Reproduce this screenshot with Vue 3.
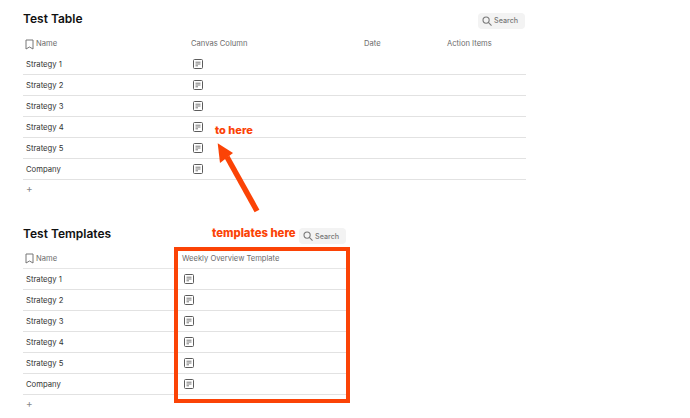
<script setup>
const names = ['Strategy 1','Strategy 2','Strategy 3','Strategy 4','Strategy 5','Company']
</script>

<template>
  <div class="page">
    <section class="block first">
      <div class="head wide">
        <h2>Test Table</h2>
        <button class="search">
          <svg width="10" height="10" viewBox="0 0 11 11" fill="none" stroke="#7a7a7a" stroke-width="1.2"><circle cx="4.500" cy="4.500" r="3.400"/><path d="M7 7l3.200 3.200" stroke-linecap="round"/></svg>
          Search
        </button>
      </div>
      <div class="table t1">
        <div class="row hdr">
          <div class="cell namecell">
            <svg class="mark" width="9" height="11" viewBox="0 0 9 11" fill="none" stroke="#777" stroke-width="1"><path d="M1 1h7v9L4.500 8 1 10z" stroke-linejoin="round"/></svg>
            Name
          </div>
          <div class="cell">Canvas Column</div>
          <div class="cell">Date</div>
          <div class="cell">Action Items</div>
        </div>
        <div class="row body" v-for="n in names" :key="n">
          <div class="cell txt">{{ n }}</div>
          <div class="cell iconcell">
            <svg width="10" height="10" viewBox="0 0 10 10" fill="none" stroke="#5c5c5c" stroke-width="1"><rect x="0.500" y="0.500" width="9" height="9" rx="1"/><path d="M2.500 3.200h5M2.500 5h5M2.500 6.800h2.500" stroke-width="0.800"/></svg>
          </div>
          <div class="cell"></div>
          <div class="cell"></div>
        </div>
      </div>
      <div class="plus">+</div>
    </section>

    <section class="block second">
      <div class="head narrow">
        <h2>Test Templates</h2>
        <span class="gap"></span>
        <button class="search">
          <svg width="10" height="10" viewBox="0 0 11 11" fill="none" stroke="#7a7a7a" stroke-width="1.2"><circle cx="4.500" cy="4.500" r="3.400"/><path d="M7 7l3.200 3.200" stroke-linecap="round"/></svg>
          Search
        </button>
      </div>
      <div class="table t2">
        <div class="row hdr lined">
          <div class="cell namecell">
            <svg class="mark" width="9" height="11" viewBox="0 0 9 11" fill="none" stroke="#777" stroke-width="1"><path d="M1 1h7v9L4.500 8 1 10z" stroke-linejoin="round"/></svg>
            Name
          </div>
          <div class="cell">Weekly Overview Template</div>
        </div>
        <div class="row body" v-for="n in names" :key="n">
          <div class="cell txt">{{ n }}</div>
          <div class="cell iconcell">
            <svg width="10" height="10" viewBox="0 0 10 10" fill="none" stroke="#5c5c5c" stroke-width="1"><rect x="0.500" y="0.500" width="9" height="9" rx="1"/><path d="M2.500 3.200h5M2.500 5h5M2.500 6.800h2.500" stroke-width="0.800"/></svg>
          </div>
        </div>
      </div>
      <div class="plus">+</div>
    </section>

    <div class="note to">to here</div>
    <div class="note tpl">templates here</div>
    <div class="box"></div>
    <svg class="arrow" width="60" height="80" viewBox="0 0 60 80">
      <path d="M41 69 L11 15" stroke="#fb4306" stroke-width="5.500" fill="none"/>
      <path d="M1.700 1.300 L17 11 L4 21 Z" fill="#fb4306"/>
    </svg>
  </div>
</template>

<style>
html, body { margin: 0; background: #fff; }
</style>

<style scoped>
.page {
  position: relative;
  width: 690px;
  height: 418px;
  overflow: hidden;
  font-family: Inter, "Liberation Sans", sans-serif;
  background: #fff;
}
.block { margin-left: 23px; }
.first { padding-top: 9px; }
.second { padding-top: 24px; }
.head { display: flex; align-items: center; height: 20px; }
.wide { width: 503px; justify-content: space-between; padding-right: 1px; box-sizing: border-box; }
.narrow { width: 323px; }
.gap { flex: 1; }
h2 {
  margin: 0;
  font-size: 12px;
  font-weight: 600;
  color: #111;
  line-height: 18px;
}
.search {
  display: flex;
  align-items: center;
  gap: 2px;
  height: 16px;
  width: 47px;
  padding: 0 0 0 4px;
  border: 0;
  border-radius: 4px;
  background: #f3f3f3;
  color: #787878;
  font: 500 7.200px Inter, "Liberation Sans", sans-serif;
  box-sizing: border-box;
  margin-top: 4px;
}
.first .search { margin-top: 3px; }
.table { margin-top: 4px; }
.t1 { width: 503px; }
.t2 { width: 327px; margin-top: 4px; }
.row { display: grid; box-sizing: border-box; align-items: center; }
.t1 .row { grid-template-columns: 165px 173px 83px 82px; }
.t2 .row { grid-template-columns: 156px 171px; }
.hdr { height: 21px; color: #6b6b6b; font-size: 7.600px; }
.lined { border-bottom: 1px solid #e6e6e6; }
.body { height: 21px; border-bottom: 1px solid #e2e2e2; }
.cell { padding-left: 3px; min-width: 0; white-space: nowrap; }
.namecell { display: flex; align-items: center; gap: 2px; padding-left: 2px; }
.mark { margin-top: 1px; }
.txt { font-size: 7.700px; color: #333; }
.iconcell { display: flex; align-items: center; }
.t1 .iconcell { padding-left: 5px; }
.t2 .iconcell { padding-left: 5px; }
.plus {
  padding-left: 3px;
  height: 20px;
  line-height: 16px;
  font-size: 10px;
  color: #888;
}
.note {
  position: absolute;
  color: #fb4306;
  font-weight: 800;
  white-space: nowrap;
  line-height: 14px;
}
.to { left: 215px; top: 123px; font-size: 11px; }
.tpl { left: 212px; top: 226px; font-size: 11.300px; }
.box {
  position: absolute;
  left: 174px;
  top: 247px;
  width: 176px;
  height: 156px;
  border: 4px solid #fb4306;
  box-sizing: border-box;
}
.arrow { position: absolute; left: 216px; top: 142px; }
</style>
